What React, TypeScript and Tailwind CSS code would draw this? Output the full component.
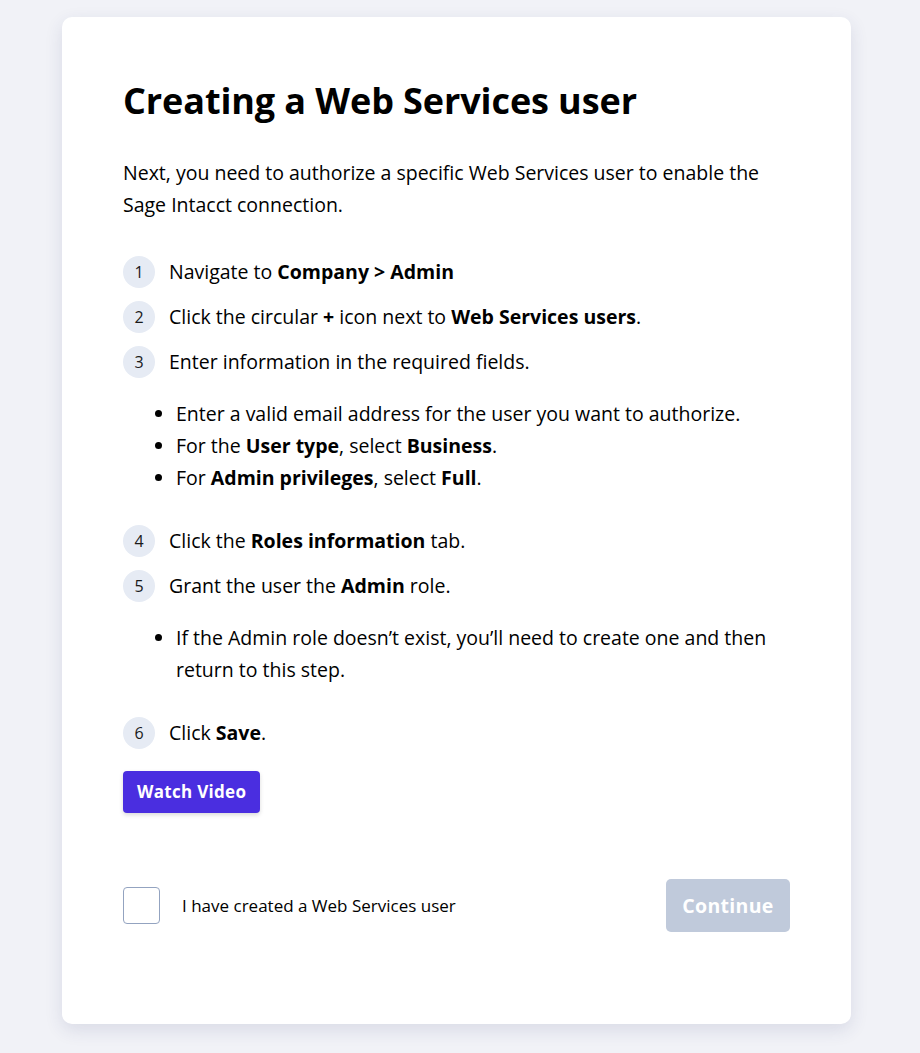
const font = { fontFamily: '"Open Sans", "Noto Sans", sans-serif' };

function Step({ n, children }: { n: number; children: React.ReactNode }) {
  return (
    <li className="flex items-center h-[45px]">
      <span className="flex items-center justify-center w-8 h-8 rounded-full bg-[#e6ebf4] text-[16px] text-[#1a1a1a] shrink-0">
        {n}
      </span>
      <span className="ml-[14px] text-[19.5px] text-black">{children}</span>
    </li>
  );
}

function Bullets({ items }: { items: React.ReactNode[] }) {
  return (
    <ul className="list-disc pl-[53px] pt-[14px] pb-[24px] text-[19.5px] leading-[32px] text-black">
      {items.map((it, i) => (
        <li key={i}>{it}</li>
      ))}
    </ul>
  );
}

export default function App() {
  return (
    <div className="min-h-[1053px] bg-[#f1f2f7] pt-[17px] pb-[29px]" style={font}>
      <div className="ml-[62px] w-[789px] h-[1007px] bg-white rounded-[10px] shadow-[0_6px_18px_rgba(40,50,110,0.12)] px-[61px] pt-[62px]">
        <h1 className="text-[36px] font-bold text-black leading-[44px] tracking-[-0.1px]">
          Creating a Web Services user
        </h1>
        <p className="mt-[34px] text-[19.5px] leading-[32px] text-black">
          Next, you need to authorize a specific Web Services user to enable the Sage Intacct connection.
        </p>

        <ol className="mt-[28px]">
          <Step n={1}>
            Navigate to <b>Company &gt; Admin</b>
          </Step>
          <Step n={2}>
            Click the circular <b>+</b> icon next to <b>Web Services users</b>.
          </Step>
          <Step n={3}>Enter information in the required fields.</Step>
        </ol>
        <Bullets
          items={[
            'Enter a valid email address for the user you want to authorize.',
            <>
              For the <b>User type</b>, select <b>Business</b>.
            </>,
            <>
              For <b>Admin privileges</b>, select <b>Full</b>.
            </>,
          ]}
        />
        <ol>
          <Step n={4}>
            Click the <b>Roles information</b> tab.
          </Step>
          <Step n={5}>
            Grant the user the <b>Admin</b> role.
          </Step>
        </ol>
        <Bullets
          items={["If the Admin role doesn’t exist, you’ll need to create one and then return to this step."]}
        />
        <ol>
          <Step n={6}>
            Click <b>Save</b>.
          </Step>
        </ol>

        <button className="mt-[16px] h-[42px] px-[14px] rounded-[4px] bg-[#4a2ee0] text-white text-[17px] font-bold tracking-[0.3px] shadow-[0_2px_4px_rgba(0,0,0,0.15)]">
          Watch Video
        </button>

        <div className="mt-[66px] flex items-center justify-between">
          <label className="flex items-center">
            <span className="w-[37px] h-[37px] rounded-[4px] border border-[#93a3c0] bg-white" />
            <span className="ml-[22px] text-[17px] text-black">I have created a Web Services user</span>
          </label>
          <button className="h-[53px] w-[124px] rounded-[5px] bg-[#c0cadb] text-white text-[19.5px] font-bold tracking-[0.3px]">
            Continue
          </button>
        </div>
      </div>
    </div>
  );
}
